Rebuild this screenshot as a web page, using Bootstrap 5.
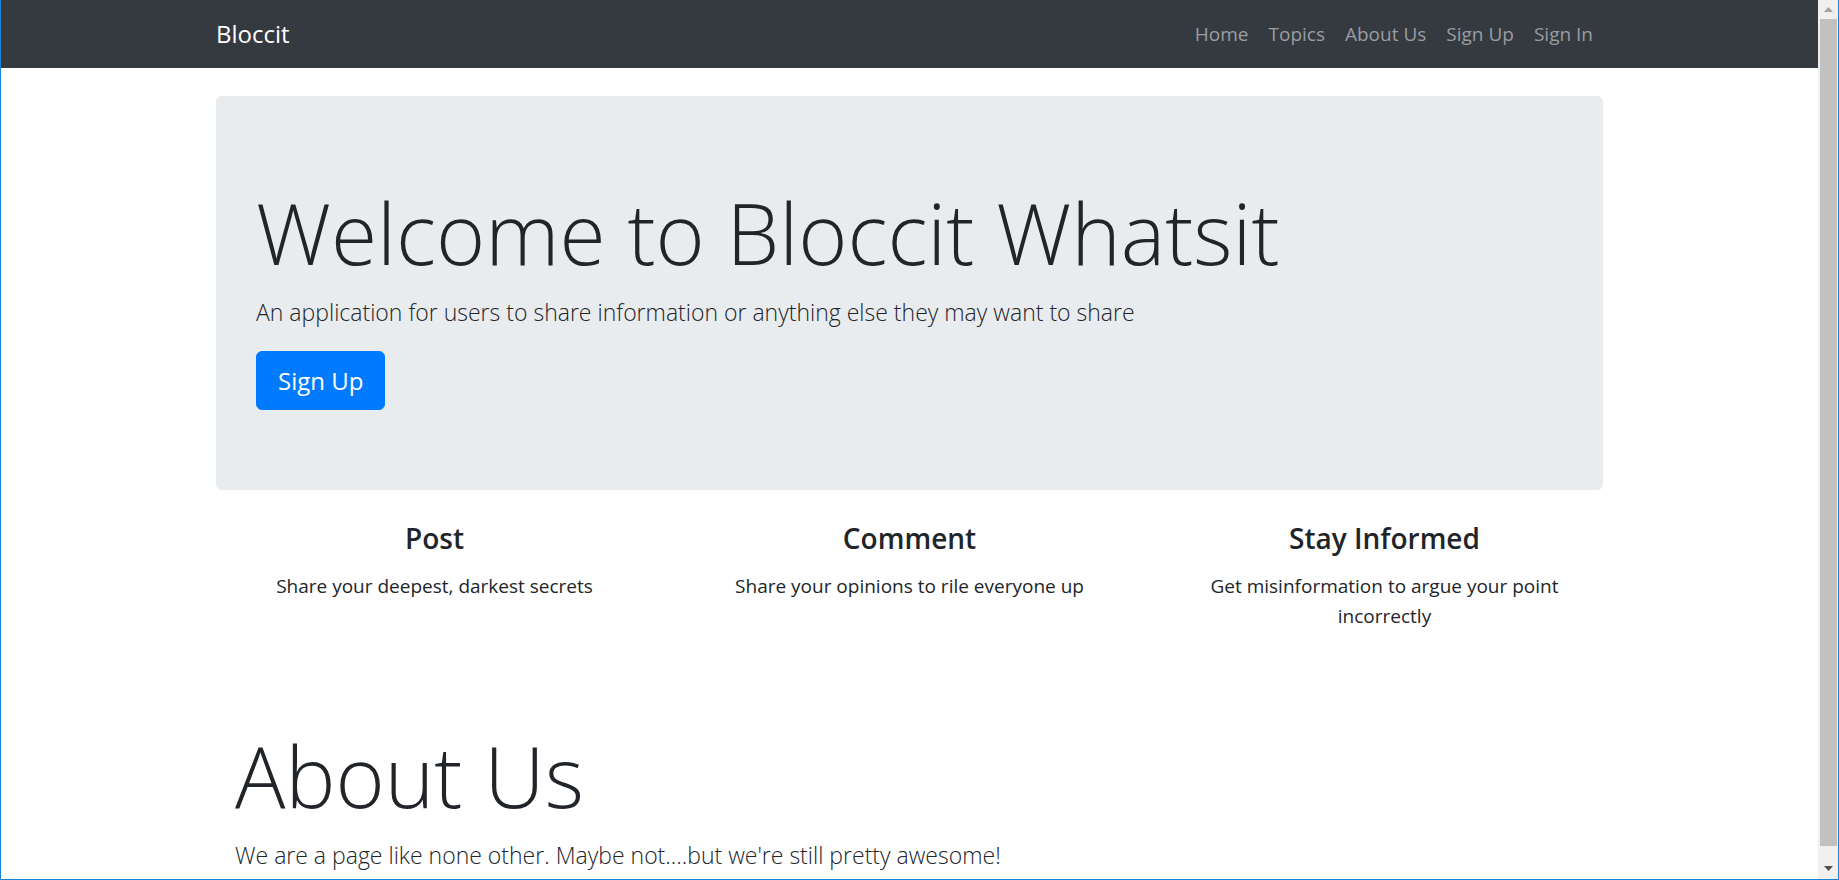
<!DOCTYPE html>
<html lang="en">
<head>
<meta charset="utf-8">
<meta name="viewport" content="width=device-width, initial-scale=1">
<title>Bloccit</title>
<link href="https://cdn.jsdelivr.net/npm/bootstrap@5.3.0/dist/css/bootstrap.min.css" rel="stylesheet">
<style>
  html { font-size: 20px; }
  body { font-family: "Open Sans", "Noto Sans", sans-serif; font-size: 19px; line-height: 30px; color: #212529; }
  .frame { border: 1px solid #1883d7; border-top: 0; }
  .container { max-width: 1425px; --bs-gutter-x: 38px; }
  .row { --bs-gutter-x: 38px; }
  .site-nav { background: #343a40; height: 68px; }
  .site-nav .navbar-brand { font-size: 24px; }
  .site-nav .nav-link { --bs-nav-link-color: #9a9da0; font-size: 19px; padding: 10px; }
  .hero { background: #e9ecef; border-radius: 6px; padding: 80px 40px; margin: 28px 0; }
  .title { font-size: 84px; font-weight: 300; line-height: 114px; margin-bottom: 4px; }
  .tagline { font-size: 23px; font-weight: 300; line-height: 37px; }
  .btn-signup { --bs-btn-bg: #007bff; --bs-btn-border-color: #007bff; font-size: 24px; line-height: 37px; padding: 10px 21px; border-radius: 6px; }
  .feature h4 { font-size: 28px; font-weight: 600; line-height: 40px; margin-bottom: 13px; }
  .about { padding: 68px 19px 0; }
  .scroller { width: 20px; background: #f0f0f0; }
  .scroller .arrow { height: 19px; }
  .scroller .arrow-down { height: 33px; }
  .scroller .thumb { background: #c1c1c1; margin: 0 1px 0 2px; }
</style>
</head>
<body>
<div class="frame d-flex vh-100 overflow-hidden">
  <div class="flex-grow-1 overflow-hidden">
    <nav class="site-nav navbar navbar-expand navbar-dark py-0">
      <div class="container">
        <a class="navbar-brand" href="#">Bloccit</a>
        <ul class="navbar-nav ms-auto">
          <li class="nav-item"><a class="nav-link" href="#">Home</a></li>
          <li class="nav-item"><a class="nav-link" href="#">Topics</a></li>
          <li class="nav-item"><a class="nav-link" href="#about">About Us</a></li>
          <li class="nav-item"><a class="nav-link" href="#">Sign Up</a></li>
          <li class="nav-item"><a class="nav-link" href="#">Sign In</a></li>
        </ul>
      </div>
    </nav>
    <main class="container">
      <section class="hero">
        <h1 class="title">Welcome to Bloccit Whatsit</h1>
        <p class="tagline">An application for users to share information or anything else they may want to share</p>
        <button type="button" class="btn btn-primary btn-signup">Sign Up</button>
      </section>
      <section class="row text-center features">
        <div class="col-md-4 feature"><h4>Post</h4><p>Share your deepest, darkest secrets</p></div>
        <div class="col-md-4 feature"><h4>Comment</h4><p>Share your opinions to rile everyone up</p></div>
        <div class="col-md-4 feature"><h4>Stay Informed</h4><p>Get misinformation to argue your point incorrectly</p></div>
      </section>
      <section class="about" id="about">
        <h1 class="title">About Us</h1>
        <p class="tagline">We are a page like none other. Maybe not....but we're still pretty awesome!</p>
      </section>
    </main>
  </div>
  <div class="scroller flex-shrink-0 d-flex flex-column" aria-hidden="true">
    <svg class="arrow" width="20" height="19" viewBox="0 0 20 19"><path d="M6 12 10.500 7 15 12z" fill="#a3a3a3"/></svg>
    <div class="thumb flex-grow-1"></div>
    <svg class="arrow-down" width="20" height="33" viewBox="0 0 20 33"><path d="M6 20 10.500 25 15 20z" fill="#505050"/></svg>
  </div>
</div>
<script src="https://cdn.jsdelivr.net/npm/bootstrap@5.3.0/dist/js/bootstrap.bundle.min.js"></script>
</body>
</html>
